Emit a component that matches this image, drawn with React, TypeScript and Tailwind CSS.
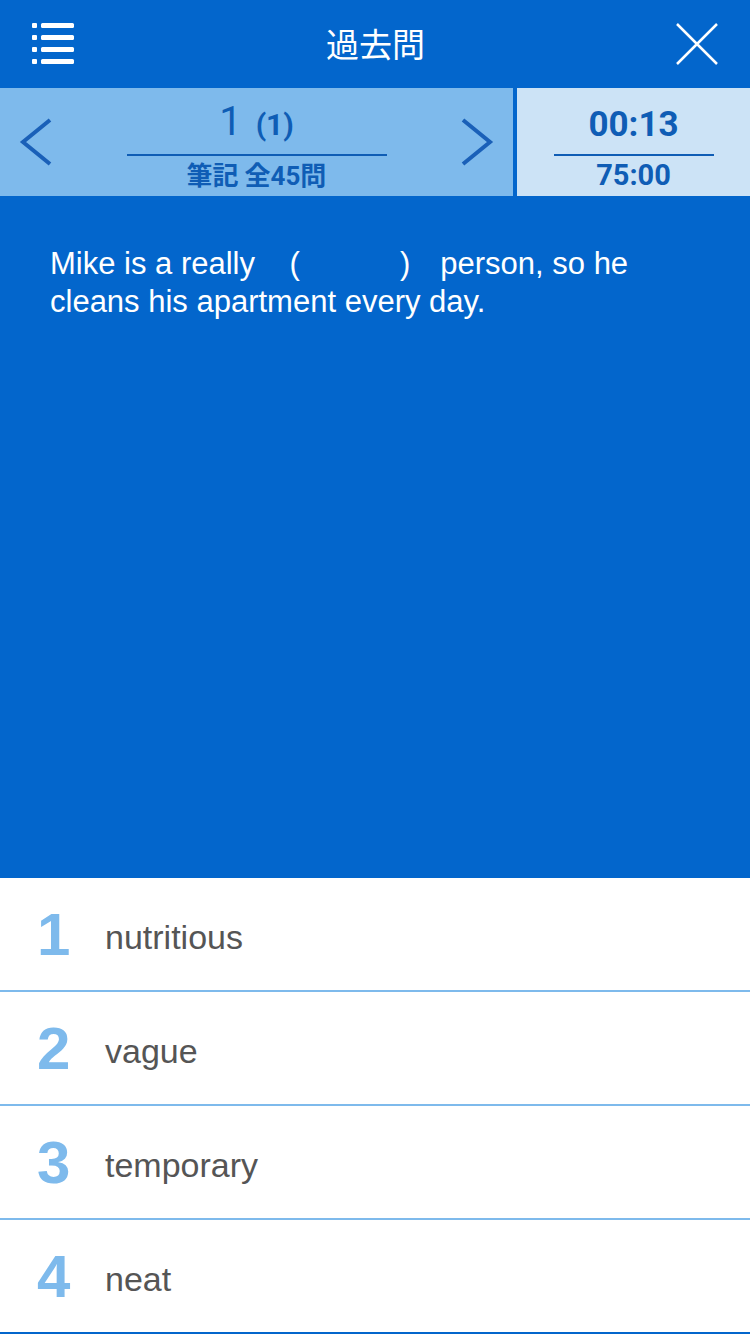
import React from 'react';

const choices = [
  { no: 1, word: 'nutritious' },
  { no: 2, word: 'vague' },
  { no: 3, word: 'temporary' },
  { no: 4, word: 'neat' },
];

const ListIcon: React.FC = () => (
  <svg width="44" height="44" viewBox="0 0 44 44" fill="#fff">
    {[1, 13, 25, 37].map((y) => (
      <g key={y}>
        <rect x="1" y={y} width="5" height="5" rx="1" />
        <rect x="10" y={y} width="33" height="5" rx="1.5" />
      </g>
    ))}
  </svg>
);

const CloseIcon: React.FC = () => (
  <svg width="42" height="42" viewBox="0 0 42 42" stroke="#fff" strokeWidth="2.5">
    <path d="M1 1 L41 41 M41 1 L1 41" />
  </svg>
);

const Chevron: React.FC<{ dir: 'left' | 'right' }> = ({ dir }) => (
  <svg width="34" height="48" viewBox="0 0 34 48" fill="none" stroke="#1a60b8" strokeWidth="4">
    {dir === 'left' ? <path d="M31 2 L4 24 L31 46" /> : <path d="M3 2 L30 24 L3 46" />}
  </svg>
);

const App: React.FC = () => {
  return (
    <div className="w-[750px] h-[1334px] flex flex-col bg-white font-['Liberation_Sans','Noto_Sans_CJK_JP',sans-serif] overflow-hidden">
      {/* header */}
      <div className="h-[88px] shrink-0 bg-[#0366cc] flex items-center justify-between pl-[31px] pr-[32px]">
        <ListIcon />
        <span className="text-white text-[33px] font-['Noto_Sans_CJK_JP',sans-serif] leading-none -mt-[2px]">過去問</span>
        <CloseIcon />
      </div>

      {/* nav */}
      <div className="h-[108px] shrink-0 flex">
        <div className="w-[513px] bg-[#7ebaec] flex items-center justify-between px-[19px]">
          <Chevron dir="left" />
          <div className="w-[260px] h-full flex flex-col items-center text-[#0f5db5] pt-[14px]">
            <div className="flex items-baseline gap-[14px] leading-none">
              <span className="text-[40px] font-['Roboto',sans-serif]">1</span>
              <span className="text-[30px] font-bold font-['Roboto',sans-serif]">(1)</span>
            </div>
            <div className="w-full h-[2px] bg-[#0f5db5] mt-[12px]" />
            <div className="text-[26px] font-bold leading-none mt-[5px] font-['Noto_Sans_CJK_JP',sans-serif]">
              筆記 全<span className="font-['Roboto',sans-serif]">45</span>問
            </div>
          </div>
          <Chevron dir="right" />
        </div>
        <div className="w-[4px] bg-[#0366cc]" />
        <div className="flex-1 bg-[#cce3f6] flex flex-col items-center text-[#0f5db5] font-bold pt-[19px]">
          <span className="text-[35px] leading-none font-['Roboto',sans-serif]">00:13</span>
          <div className="w-[160px] h-[2px] bg-[#0f5db5] mt-[12px]" />
          <span className="text-[29px] leading-none mt-[5px] font-['Roboto',sans-serif]">75:00</span>
        </div>
      </div>

      {/* question */}
      <div className="h-[682px] shrink-0 bg-[#0366cc] px-[50px] pt-[49px]">
        <p className="max-w-[640px] text-white text-[31px] leading-[38px]">
          Mike is a really <span className="ml-[26px]">(</span>
          <span className="inline-block w-[100px]" />
          <span>)</span>
          <span className="ml-[30px]">person, so he</span> cleans his apartment every day.
        </p>
      </div>

      {/* choices */}
      <div className="flex flex-col">
        {choices.map((c, i) => (
          <div
            key={c.no}
            className={
              i === choices.length - 1
                ? 'h-[114px] flex items-center border-b-2 border-[#0366cc]'
                : 'h-[114px] flex items-center border-b-2 border-[#7ebaec]'
            }
          >
            <span className="w-[105px] pl-[37px] text-[60px] font-bold leading-none text-[#7ebaec] mt-[2px]">{c.no}</span>
            <span className="text-[34px] text-[#555555] leading-none mt-[5px]">{c.word}</span>
          </div>
        ))}
      </div>
    </div>
  );
};

export default App;
